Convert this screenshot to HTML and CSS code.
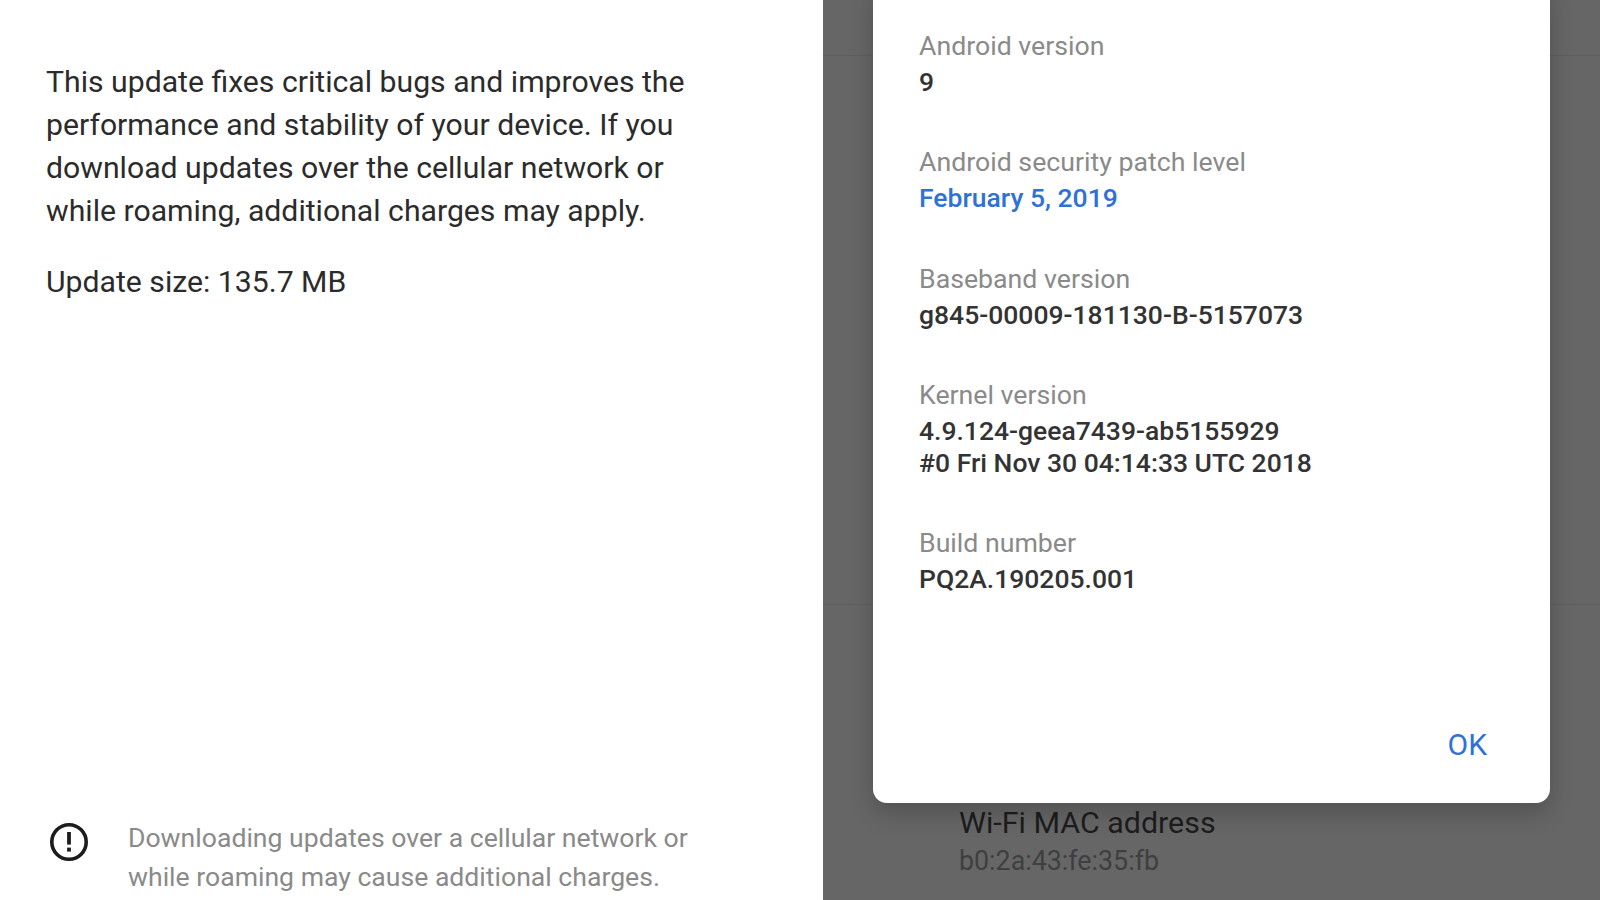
FILE: index.html
```html
<!DOCTYPE html>
<html lang="en">
<head>
    <meta charset="UTF-8">
    <title>System update and Android version</title>
    <link rel="stylesheet" href="styles.css">
</head>
<body>
    <div class="screens">
        <section class="update-pane">
            <div class="update-text">
                <p class="update-desc">This update fixes critical bugs and improves the performance and stability of your device. If you download updates over the cellular network or while roaming, additional charges may apply.</p>
                <p class="update-size">Update size: 135.7 MB</p>
            </div>
            <div class="update-note">
                <svg class="note-icon" viewBox="0 0 40 40" width="40" height="40">
                    <circle cx="20" cy="20" r="17.2" fill="none" stroke="#1c1c1c" stroke-width="3.6"/>
                    <rect x="18.1" y="10" width="3.8" height="12.6" fill="#1c1c1c"/>
                    <rect x="18.1" y="25.6" width="3.8" height="4" fill="#1c1c1c"/>
                </svg>
                <p class="note-text">Downloading updates over a cellular network or while roaming may cause additional charges.</p>
            </div>
        </section>

        <section class="about-pane">
            <div class="about-list">
                <div class="about-rule about-rule-top"></div>
                <div class="about-rule about-rule-mid"></div>
                <div class="mac-row">
                    <div class="mac-title">Wi-Fi MAC address</div>
                    <div class="mac-value">b0:2a:43:fe:35:fb</div>
                </div>
            </div>

            <div class="dialog">
                <div class="dialog-item">
                    <div class="item-label">Android version</div>
                    <div class="item-value">9</div>
                </div>
                <div class="dialog-item">
                    <div class="item-label">Android security patch level</div>
                    <div class="item-value item-link">February 5, 2019</div>
                </div>
                <div class="dialog-item">
                    <div class="item-label">Baseband version</div>
                    <div class="item-value">g845-00009-181130-B-5157073</div>
                </div>
                <div class="dialog-item">
                    <div class="item-label">Kernel version</div>
                    <div class="item-value">4.9.124-geea7439-ab5155929<br>#0 Fri Nov 30 04:14:33 UTC 2018</div>
                </div>
                <div class="dialog-item">
                    <div class="item-label">Build number</div>
                    <div class="item-value">PQ2A.190205.001</div>
                </div>
                <div class="dialog-actions">
                    <button class="ok-btn">OK</button>
                </div>
            </div>
        </section>
    </div>
</body>
</html>
```

FILE: styles.css
```css
* {
    box-sizing: border-box;
}

body {
    margin: 0;
    width: 1600px;
    height: 900px;
    overflow: hidden;
    font-family: Roboto, "Liberation Sans", sans-serif;
    background: #fff;
}

p {
    margin: 0;
}

.screens {
    display: flex;
    height: 900px;
}

/* Left phone screen */
.update-pane {
    width: 823px;
    padding: 60px 46px 0;
    display: flex;
    flex-direction: column;
    justify-content: space-between;
    background: #fff;
}

.update-text {
    width: 670px;
}

.update-desc {
    font-size: 30.2px;
    line-height: 43px;
    color: #2b2b2b;
}

.update-size {
    margin-top: 28px;
    font-size: 30.2px;
    line-height: 43px;
    color: #2b2b2b;
}

.update-note {
    display: flex;
    gap: 39px;
    padding-bottom: 4px;
    margin-left: 3px;
}

.note-icon {
    flex-shrink: 0;
    margin-top: 3px;
}

.note-text {
    width: 580px;
    font-size: 26.6px;
    line-height: 38.5px;
    color: #8a8a8a;
}

/* Right phone screen, dimmed behind the dialog */
.about-pane {
    position: relative;
    width: 777px;
    background: #666;
}

.about-list {
    height: 100%;
    display: flex;
    flex-direction: column;
}

.about-rule {
    height: 1px;
    background: #5e5e5e;
}

.about-rule-top {
    margin-top: 55px;
}

.about-rule-mid {
    margin-top: 548px;
}

.mac-row {
    margin-top: 198px;
    padding-left: 136px;
}

.mac-title {
    font-size: 30.4px;
    line-height: 40px;
    color: #1d1d1d;
}

.mac-value {
    font-size: 26.8px;
    line-height: 36px;
    color: #3f3f3f;
}

.dialog {
    position: absolute;
    top: -20px;
    left: 50px;
    width: 677px;
    height: 823px;
    padding: 47.5px 63px 0 46px;
    display: flex;
    flex-direction: column;
    background: #fff;
    border-radius: 14px;
    box-shadow: 0 10px 24px rgba(0, 0, 0, 0.2);
}

.dialog-item {
    margin-bottom: 47px;
}

.item-label {
    font-size: 26.7px;
    line-height: 36px;
    color: #8a8a8a;
}

.item-value {
    margin-top: 2px;
    font-size: 26.5px;
    line-height: 31.6px;
    font-weight: 500;
    color: #333;
}

.item-link {
    color: #2f72d6;
}

.dialog-actions {
    margin-top: auto;
    padding-bottom: 38px;
    display: flex;
    justify-content: flex-end;
}

.ok-btn {
    padding: 0;
    border: none;
    background: none;
    font-family: inherit;
    font-size: 30px;
    line-height: 40px;
    font-weight: 400;
    color: #2f72d6;
}
```
